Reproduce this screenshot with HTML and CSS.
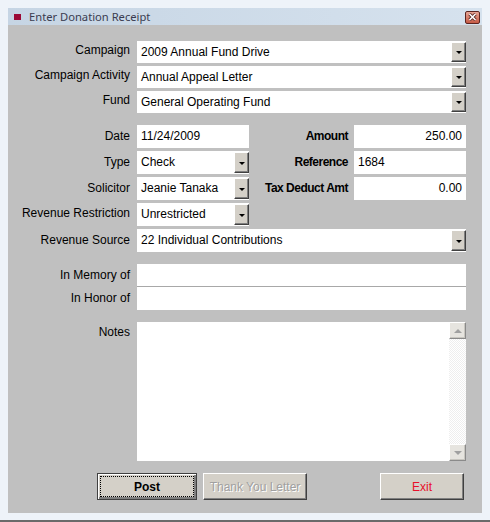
FILE: index.html
```html
<!DOCTYPE html>
<html lang="en">
<head>
    <meta charset="UTF-8">
    <title>Enter Donation Receipt</title>
    <link rel="stylesheet" href="styles.css">
</head>
<body>
    <div class="window">
        <!-- Title bar -->
        <div class="titlebar">
            <span class="app-icon"></span>
            <span class="title">Enter Donation Receipt</span>
            <span class="close">
                <svg width="9" height="8" viewBox="0 0 9 8">
                    <path d="M1.5 1 L7.5 7 M7.5 1 L1.5 7" stroke="#5a2a24" stroke-width="3.2"/>
                    <path d="M1.5 1 L7.5 7 M7.5 1 L1.5 7" stroke="#ffffff" stroke-width="1.6"/>
                </svg>
            </span>
        </div>

        <div class="content">
            <!-- Campaign / fund -->
            <div class="top-rows">
                <div class="row">
                    <div class="label top">Campaign</div>
                    <div class="field combo"><span class="value">2009 Annual Fund Drive</span><span class="drop"><i></i></span></div>
                </div>
                <div class="row">
                    <div class="label top">Campaign Activity</div>
                    <div class="field combo"><span class="value">Annual Appeal Letter</span><span class="drop"><i></i></span></div>
                </div>
                <div class="row">
                    <div class="label top">Fund</div>
                    <div class="field combo"><span class="value">General Operating Fund</span><span class="drop"><i></i></span></div>
                </div>
            </div>

            <!-- Receipt details -->
            <div class="mid-grid">
                <div class="label">Date</div>
                <div class="field"><span class="value">11/24/2009</span></div>
                <div class="label bold">Amount</div>
                <div class="field"><span class="value num">250.00</span></div>

                <div class="label">Type</div>
                <div class="field combo"><span class="value">Check</span><span class="drop"><i></i></span></div>
                <div class="label bold">Reference</div>
                <div class="field"><span class="value">1684</span></div>

                <div class="label">Solicitor</div>
                <div class="field combo"><span class="value">Jeanie Tanaka</span><span class="drop"><i></i></span></div>
                <div class="label bold">Tax Deduct Amt</div>
                <div class="field"><span class="value num">0.00</span></div>

                <div class="label rr">Revenue Restriction</div>
                <div class="field combo"><span class="value">Unrestricted</span><span class="drop"><i></i></span></div>
                <div class="spacer"></div>
                <div class="spacer"></div>

                <div class="label">Revenue Source</div>
                <div class="field combo wide"><span class="value">22 Individual Contributions</span><span class="drop"><i></i></span></div>
            </div>

            <!-- Memorial -->
            <div class="memo-rows">
                <div class="row memo">
                    <div class="label">In Memory of</div>
                    <div class="field line"></div>
                </div>
                <div class="row memo">
                    <div class="label">In Honor of</div>
                    <div class="field"></div>
                </div>
            </div>

            <!-- Notes -->
            <div class="row notes">
                <div class="label">Notes</div>
                <div class="field notes-box">
                    <div class="notes-text"></div>
                    <div class="scrollbar">
                        <span class="sb-btn"><i class="up"></i></span>
                        <span class="sb-track"></span>
                        <span class="sb-btn"><i class="down"></i></span>
                    </div>
                </div>
            </div>

            <!-- Buttons -->
            <div class="buttons">
                <button class="btn default"><span class="focus">Post</span></button>
                <button class="btn disabled">Thank You Letter</button>
                <button class="btn exit">Exit</button>
            </div>
        </div>
    </div>
</body>
</html>
```

FILE: styles.css
```css
body {
    margin: 0;
    background-color: #eef3f9;
    font-family: "Liberation Sans", Arial, sans-serif;
    font-size: 12px;
    color: #000;
}

/* Window frame */
.window {
    width: 490px;
    height: 522px;
    box-sizing: border-box;
    padding: 8px 8px 7px 8px;
    background-color: #eef3f9;
    border-bottom: 2px solid #6a6a6a;
}

/* Title bar */
.titlebar {
    height: 17px;
    display: flex;
    align-items: center;
    background: linear-gradient(to right, #c6d5e4, #d6e2ee);
}
.app-icon {
    width: 7px;
    height: 6px;
    background-color: #9b0a36;
    margin-left: 6px;
    margin-right: 8px;
}
.title {
    font-family: "Noto Sans", sans-serif;
    font-size: 11.2px;
    color: #3a3c50;
    flex: 1;
}
.close {
    width: 13px;
    height: 11px;
    margin-right: 2px;
    margin-top: 1px;
    border: 1px solid #5c2520;
    border-radius: 2px;
    background: linear-gradient(#e7a595, #c65a44);
    display: flex;
    align-items: center;
    justify-content: center;
}

/* Form area */
.content {
    height: 488px;
    box-sizing: border-box;
    background-color: #c0c0c0;
    padding: 16px 16px 0 0;
}

.row {
    display: flex;
}
.top-rows .row {
    height: 22px;
    margin-bottom: 3px;
}
.label {
    width: 129px;
    flex: none;
    box-sizing: border-box;
    padding-right: 7px;
    text-align: right;
    line-height: 23px;
    white-space: nowrap;
}
.label.top {
    line-height: 19px;
}
.label.rr {
    line-height: 20px;
}
.label.bold {
    font-weight: bold;
    letter-spacing: -0.5px;
    width: auto;
    padding-right: 6px;
}

.field {
    flex: 1;
    background-color: #fff;
    display: flex;
    min-width: 0;
}
.value {
    flex: 1;
    padding-left: 4px;
    line-height: 22px;
    white-space: nowrap;
    overflow: hidden;
}
.value.num {
    text-align: right;
    padding-right: 4px;
}

/* Combo box drop button */
.drop {
    width: 15px;
    margin: 1px 0;
    box-sizing: border-box;
    background-color: #d4d0c8;
    border: 1px solid;
    border-color: #ffffff #404040 #404040 #ffffff;
    box-shadow: inset -1px -1px #808080;
    display: flex;
    align-items: center;
    justify-content: center;
}
.drop i {
    width: 0;
    height: 0;
    border-left: 3px solid transparent;
    border-right: 3px solid transparent;
    border-top: 3px solid #000;
    margin-top: 1px;
}

/* Middle grid */
.mid-grid {
    margin-top: 12px;
    display: grid;
    grid-template-columns: 129px 112px 105px 112px;
    grid-auto-rows: 23px;
    row-gap: 3px;
}
.wide {
    grid-column: 2 / 5;
}

/* In Memory / In Honor */
.memo-rows {
    margin-top: 12px;
}
.memo {
    height: 23px;
}
.field.line {
    border-bottom: 1px solid #a8a8a8;
}

/* Notes */
.notes {
    margin-top: 12px;
    height: 139px;
}
.notes .label {
    line-height: 20px;
}
.notes-text {
    flex: 1;
}
.scrollbar {
    width: 17px;
    display: flex;
    flex-direction: column;
}
.sb-btn {
    height: 17px;
    box-sizing: border-box;
    background-color: #e6e4df;
    border: 1px solid;
    border-color: #ffffff #8a8a8a #8a8a8a #ffffff;
    box-shadow: inset -1px -1px #c8c6c0;
    display: flex;
    align-items: center;
    justify-content: center;
}
.sb-track {
    flex: 1;
    background: repeating-conic-gradient(#ffffff 0 25%, #eeeeee 0 50%) 0 0 / 2px 2px;
}
.sb-btn i {
    width: 0;
    height: 0;
    border-left: 4px solid transparent;
    border-right: 4px solid transparent;
}
.sb-btn i.up {
    border-bottom: 4px solid #a0a0a0;
}
.sb-btn i.down {
    border-top: 4px solid #a0a0a0;
}

/* Bottom buttons */
.buttons {
    margin-top: 12px;
    display: flex;
    gap: 6px;
    padding-left: 89px;
}
.btn {
    flex: none;
    height: 27px;
    box-sizing: border-box;
    background-color: #d4d0c8;
    border: 1px solid;
    border-color: #ffffff #404040 #404040 #ffffff;
    box-shadow: inset -1px -1px #808080;
    font-family: "Liberation Sans", Arial, sans-serif;
    font-size: 12px;
    padding: 0;
}
.btn.default {
    width: 100px;
    border: 1px solid #404040;
    box-shadow: inset 1px 1px #ffffff, inset -2px -2px #808080;
    font-weight: bold;
    padding: 2px;
}
.focus {
    display: block;
    height: 100%;
    border: 1px dotted #000;
    box-sizing: border-box;
    line-height: 20px;
}
.btn.disabled {
    width: 104px;
    color: #a0a0a0;
    text-shadow: 1px 1px #ffffff;
}
.btn.exit {
    width: 84px;
    margin-left: 67px;
    color: #e8102a;
}
```
